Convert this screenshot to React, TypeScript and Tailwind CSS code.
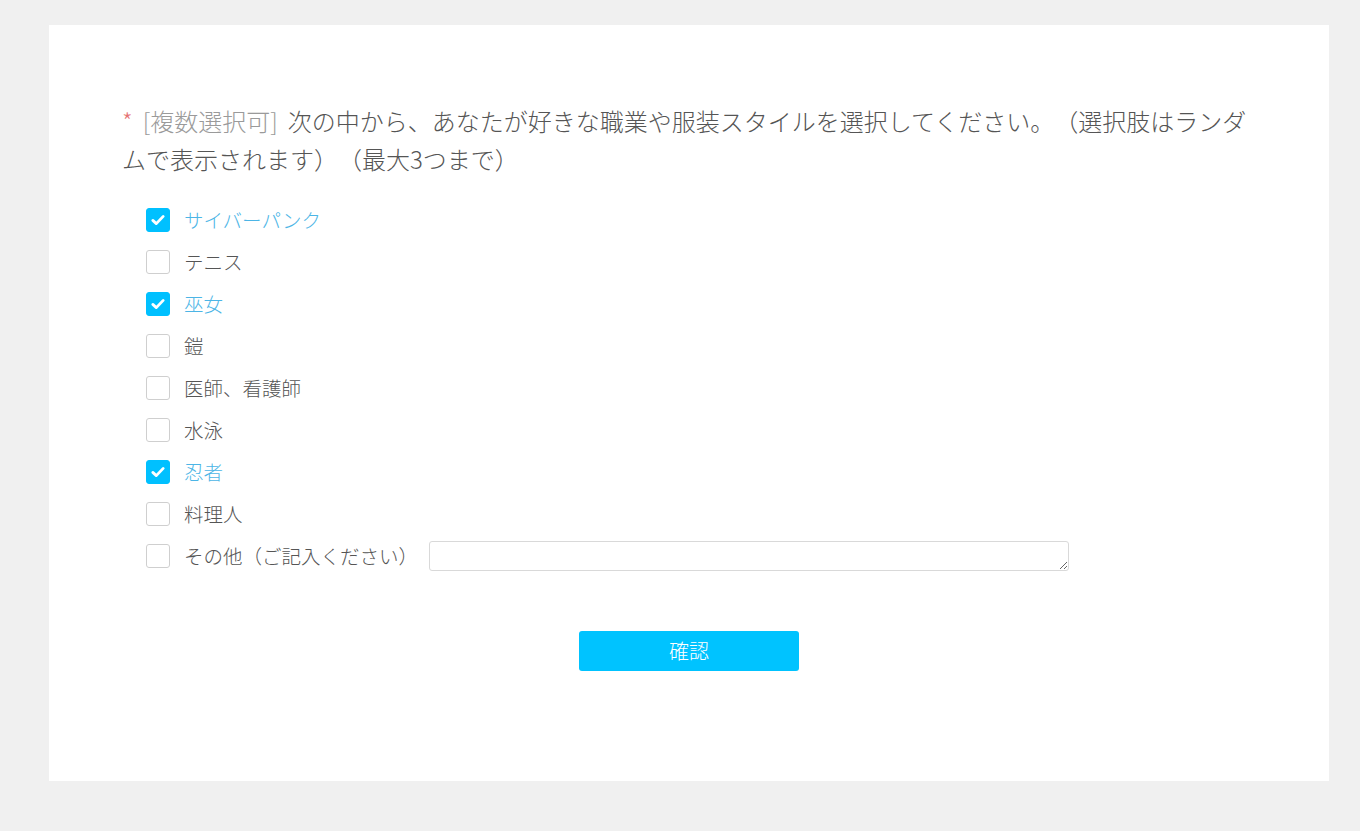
import React, { useState } from 'react';

// options shown in random order on the real survey
const options = [
  'サイバーパンク',
  'テニス',
  '巫女',
  '鎧',
  '医師、看護師',
  '水泳',
  '忍者',
  '料理人',
];

const App = () => {
  const [checked, setChecked] = useState<string[]>(['サイバーパンク', '巫女', '忍者']);
  const [other, setOther] = useState(false);

  const toggle = (name: string) => {
    setChecked((prev) => (prev.includes(name) ? prev.filter((n) => n !== name) : [...prev, name]));
  };

  const Box = ({ on }: { on: boolean }) => (
    <span
      className={
        'flex h-6 w-6 shrink-0 items-center justify-center rounded-[3px] border ' +
        (on ? 'border-[#00c0ff] bg-[#00c0ff]' : 'border-[#cfcfcf] bg-white')
      }
    >
      {on && (
        <svg width="16" height="16" viewBox="0 0 16 16" fill="none">
          <path d="M2.8 8.4 L6.3 11.6 L13.2 4.4" stroke="white" strokeWidth="2.8" strokeLinecap="round" strokeLinejoin="round" />
        </svg>
      )}
    </span>
  );

  return (
    <div
      className="min-h-screen bg-[#f0f0f0] pt-[25px] pl-[49px] pb-[50px] [text-spacing-trim:space-all]"
      style={{ fontFamily: '"Noto Sans CJK JP", "Noto Sans", sans-serif' }}
    >
      <div className="w-[1280px] h-[756px] bg-white px-[73px] pt-[77px]">
        <p className="text-[24px] leading-[38px] font-light text-[#555]">
          <span className="text-[#e57373] mr-[10px]">*</span>
          <span className="text-[#9a9a9a] mr-[10px]">[複数選択可]</span>次の中から、あなたが好きな職業や服装スタイルを選択してください。（選択肢はランダムで表示されます）（最大3つまで）
        </p>

        <div className="mt-[21px] pl-6 flex flex-col">
          {options.map((name) => {
            const on = checked.includes(name);
            return (
              <label key={name} className="flex h-[42px] items-center gap-[14px] cursor-pointer" onClick={() => toggle(name)}>
                <Box on={on} />
                <span className={'text-[19.5px] font-light ' + (on ? 'text-[#4cb5e6]' : 'text-[#555]')}>{name}</span>
              </label>
            );
          })}
          <div className="flex h-[42px] items-center">
            <label className="flex w-[283px] shrink-0 items-center gap-[14px] cursor-pointer" onClick={() => setOther(!other)}>
              <Box on={other} />
              <span className={'text-[19.5px] font-light whitespace-nowrap ' + (other ? 'text-[#4cb5e6]' : 'text-[#555]')}>その他（ご記入ください）</span>
            </label>
            <textarea className="h-[30px] w-[640px] resize-y rounded-[3px] border border-[#d9d9d9] px-2 text-[14px] outline-none" rows={1} />
          </div>
        </div>

        <div className="mt-[54px] flex justify-center">
          <button className="h-10 w-[220px] rounded-[3px] bg-[#00c3ff] text-[20px] font-light text-white">確認</button>
        </div>
      </div>
    </div>
  );
};

export default App;
